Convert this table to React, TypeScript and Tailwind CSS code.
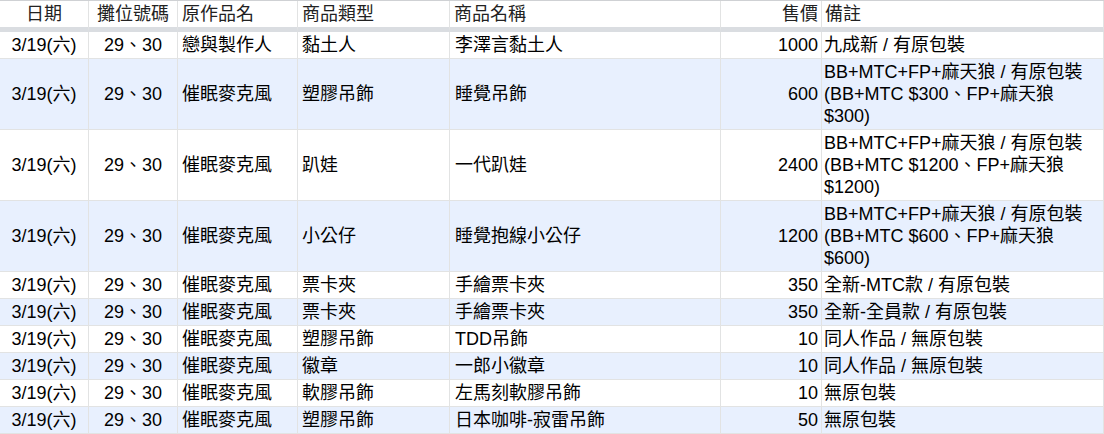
type Row = {
  date: string;
  booth: string;
  work: string;
  type: string;
  name: string;
  price: string;
  note: string[];
};

const rows: Row[] = [
  { date: '3/19(六)', booth: '29、30', work: '戀與製作人', type: '黏土人', name: '李澤言黏土人', price: '1000', note: ['九成新 / 有原包裝'] },
  {
    date: '3/19(六)', booth: '29、30', work: '催眠麥克風', type: '塑膠吊飾', name: '睡覺吊飾', price: '600',
    note: ['BB+MTC+FP+麻天狼 / 有原包裝', '(BB+MTC $300、FP+麻天狼', '$300)'],
  },
  {
    date: '3/19(六)', booth: '29、30', work: '催眠麥克風', type: '趴娃', name: '一代趴娃', price: '2400',
    note: ['BB+MTC+FP+麻天狼 / 有原包裝', '(BB+MTC $1200、FP+麻天狼', '$1200)'],
  },
  {
    date: '3/19(六)', booth: '29、30', work: '催眠麥克風', type: '小公仔', name: '睡覺抱線小公仔', price: '1200',
    note: ['BB+MTC+FP+麻天狼 / 有原包裝', '(BB+MTC $600、FP+麻天狼', '$600)'],
  },
  { date: '3/19(六)', booth: '29、30', work: '催眠麥克風', type: '票卡夾', name: '手繪票卡夾', price: '350', note: ['全新-MTC款 / 有原包裝'] },
  { date: '3/19(六)', booth: '29、30', work: '催眠麥克風', type: '票卡夾', name: '手繪票卡夾', price: '350', note: ['全新-全員款 / 有原包裝'] },
  { date: '3/19(六)', booth: '29、30', work: '催眠麥克風', type: '塑膠吊飾', name: 'TDD吊飾', price: '10', note: ['同人作品 / 無原包裝'] },
  { date: '3/19(六)', booth: '29、30', work: '催眠麥克風', type: '徽章', name: '一郎小徽章', price: '10', note: ['同人作品 / 無原包裝'] },
  { date: '3/19(六)', booth: '29、30', work: '催眠麥克風', type: '軟膠吊飾', name: '左馬刻軟膠吊飾', price: '10', note: ['無原包裝'] },
  { date: '3/19(六)', booth: '29、30', work: '催眠麥克風', type: '塑膠吊飾', name: '日本咖啡-寂雷吊飾', price: '50', note: ['無原包裝'] },
];

const grid = 'grid grid-cols-[89px_89px_120px_152px_271px_101px_1fr]';
const cell = 'flex items-center border-r border-b border-[#e2e3e3] py-[2px] px-[4px] leading-[22px] whitespace-nowrap overflow-hidden';
const head = 'flex items-center h-[31px] border-r border-[#e2e3e3] border-b-[5px] border-b-[#dadde1] px-[4px] pb-[1px] leading-[22px] whitespace-nowrap';

export default function App() {
  return (
    <div
      className="w-[1104px] h-[434px] overflow-hidden bg-white text-[18px] text-black border-t border-[#cfd1d4]"
      style={{ fontFamily: '"Liberation Sans", "Noto Sans CJK TC", sans-serif' }}
    >
      {/* header */}
      <div className={grid}>
        <div className={`${head} justify-center text-[#222]`}>日期</div>
        <div className={`${head} justify-center text-[#222]`}>攤位號碼</div>
        <div className={`${head} text-[#222]`}>原作品名</div>
        <div className={`${head} text-[#222]`}>商品類型</div>
        <div className={`${head} text-[#222]`}>商品名稱</div>
        <div className={`${head} justify-end pr-[3px] text-[#222]`}>售價</div>
        <div className={`${head} pl-[3px] text-[#222]`}>備註</div>
      </div>

      {rows.map((r, i) => (
        <div key={i} className={`${grid} ${i % 2 === 1 ? 'bg-[#e8f0fe]' : 'bg-white'}`}>
          <div className={`${cell} justify-center`}>{r.date}</div>
          <div className={`${cell} justify-center`}>{r.booth}</div>
          <div className={cell}>{r.work}</div>
          <div className={cell}>{r.type}</div>
          <div className={`${cell} pl-[5px]`}>{r.name}</div>
          <div className={`${cell} justify-end pr-[3px]`}>{r.price}</div>
          <div className={`${cell} pl-[2px]`}>
            <div>
              {r.note.map((n, j) => (
                <div key={j}>{n}</div>
              ))}
            </div>
          </div>
        </div>
      ))}
    </div>
  );
}
